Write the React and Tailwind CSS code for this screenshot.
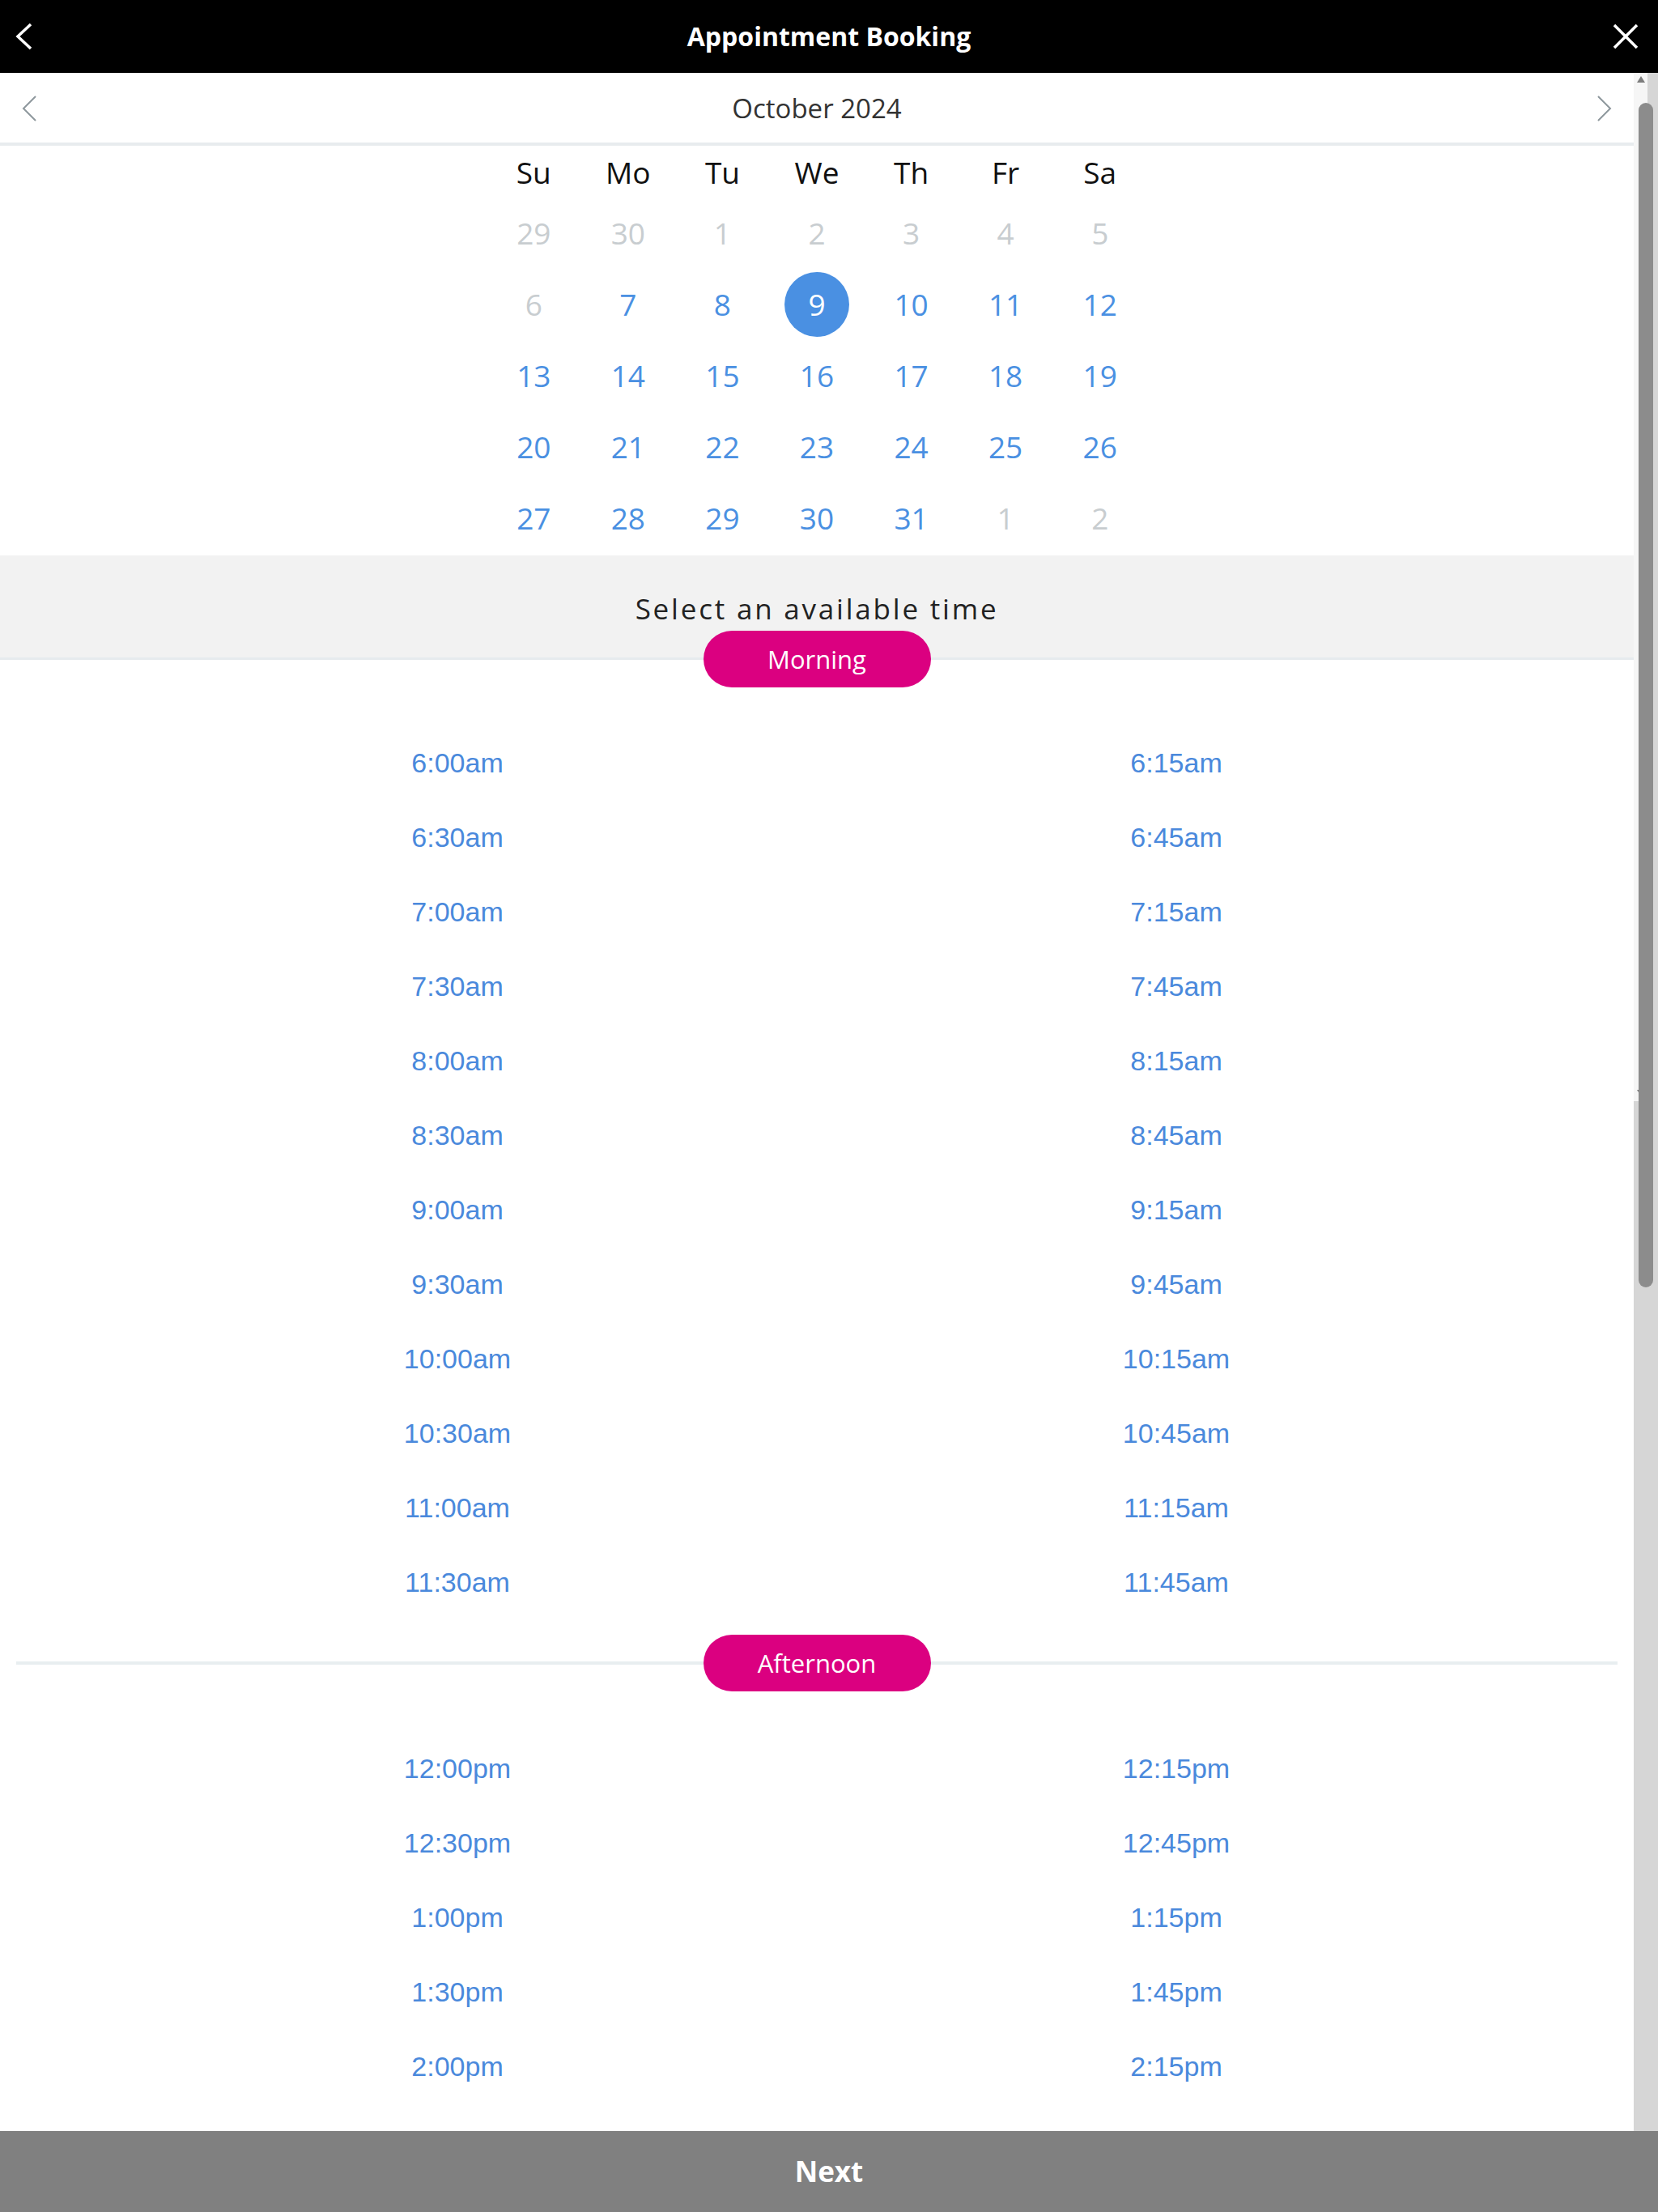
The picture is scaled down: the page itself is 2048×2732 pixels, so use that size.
import React, { useState } from "react";

const weekDays = ["Su", "Mo", "Tu", "We", "Th", "Fr", "Sa"];

// each cell: [label, muted]
const weeks = [
  [[29, true], [30, true], [1, true], [2, true], [3, true], [4, true], [5, true]],
  [[6, true], [7], [8], [9], [10], [11], [12]],
  [[13], [14], [15], [16], [17], [18], [19]],
  [[20], [21], [22], [23], [24], [25], [26]],
  [[27], [28], [29], [30], [31], [1, true], [2, true]],
];

function buildTimes(hours, suffix) {
  const out = [];
  hours.forEach((h) => {
    ["00", "15", "30", "45"].forEach((m) => out.push(`${h}:${m}${suffix}`));
  });
  return out;
}

const morning = buildTimes([6, 7, 8, 9, 10, 11], "am");
const afternoon = buildTimes([12, 1, 2, 3, 4, 5], "pm");

function Pill({ label }) {
  return (
    <div className="relative z-10 flex justify-center">
      <span className="flex h-[70px] w-[281px] items-center justify-center rounded-full bg-[#db0080] text-[31px] text-white">
        {label}
      </span>
    </div>
  );
}

function TimeGrid({ times, selected, onPick }) {
  return (
    <div className="mx-auto grid w-[1776px] grid-cols-2">
      {times.map((t) => (
        <button
          key={t}
          onClick={() => onPick(t)}
          className={`flex h-[92px] items-center justify-center pt-[1px] font-['Liberation_Sans',Arial,sans-serif] text-[34px] ${
            selected === t ? "text-[#2a5fa8]" : "text-[#4a89dc]"
          }`}
        >
          {t}
        </button>
      ))}
    </div>
  );
}

export default function App() {
  const [day, setDay] = useState(9);
  const [time, setTime] = useState(null);

  return (
    <div className="flex h-[2732px] w-[2048px] flex-col overflow-hidden bg-white font-['Open_Sans',sans-serif]">
      {/* HEADER */}
      <div className="grid h-[90px] shrink-0 grid-cols-[1fr_auto_1fr] items-center bg-black text-white">
        <div className="pl-[18px]">
          <svg width="24" height="34" viewBox="0 0 24 34" fill="none">
            <path d="M20 2 L4 17 L20 32" stroke="white" strokeWidth="3.5" />
          </svg>
        </div>
        <h1 className="text-[32px] font-bold leading-none">Appointment Booking</h1>
        <div className="flex justify-end pr-[24px]">
          <svg width="32" height="32" viewBox="0 0 32 32" fill="none">
            <path d="M2 2 L30 30 M30 2 L2 30" stroke="white" strokeWidth="3.5" />
          </svg>
        </div>
      </div>

      {/* BODY */}
      <div className="flex min-h-0 flex-1">
        <div className="min-w-0 flex-1 overflow-hidden">
          {/* MONTH NAV */}
          <div className="flex h-[90px] items-center justify-between border-b-[4px] border-[#e8ecee] pl-[26px] pr-[26px] pt-[1px]">
            <svg width="20" height="32" viewBox="0 0 20 32" fill="none">
              <path d="M18 1 L3 16 L18 31" stroke="#8d979c" strokeWidth="2" />
            </svg>
            <span className="text-[33px] text-[#333]">October 2024</span>
            <svg width="20" height="32" viewBox="0 0 20 32" fill="none">
              <path d="M2 1 L17 16 L2 31" stroke="#8d979c" strokeWidth="2" />
            </svg>
          </div>

          {/* CALENDAR */}
          <div className="mx-auto w-[816px] pt-[2px] pb-[2px]">
            <div className="grid h-[62px] grid-cols-7 items-center text-center text-[37px] text-[#111]">
              {weekDays.map((d) => (
                <span key={d}>{d}</span>
              ))}
            </div>
            {weeks.map((week, wi) => (
              <div key={wi} className="grid h-[88px] grid-cols-7 items-center">
                {week.map(([n, muted]) => {
                  const isSel = !muted && n === day;
                  return (
                    <div key={`${wi}-${n}`} className="flex justify-center">
                      <button
                        onClick={() => !muted && setDay(n)}
                        className={`flex h-[80px] w-[80px] items-center justify-center rounded-full text-[37px] ${
                          isSel
                            ? "bg-[#4a90e2] text-white"
                            : muted
                            ? "text-[#c8cdd0]"
                            : "text-[#4a90e2]"
                        }`}
                      >
                        {n}
                      </button>
                    </div>
                  );
                })}
              </div>
            ))}
          </div>

          {/* TIME PICKER */}
          <div className="flex h-[129px] items-start justify-center border-b-[3px] border-[#e6ebee] bg-[#f2f2f2] pt-[43px]">
            <span className="text-[35px] leading-[46px] tracking-[0.08em] text-[#222]">
              Select an available time
            </span>
          </div>
          <div className="-mt-[36px]">
            <Pill label="Morning" />
          </div>
          <div className="mt-[47px]">
            <TimeGrid times={morning} selected={time} onPick={setTime} />
          </div>

          <div className="relative mt-[19px] mb-[49px]">
            <div className="absolute left-[20px] right-[20px] top-[33px] h-[4px] bg-[#e8eef0]" />
            <Pill label="Afternoon" />
          </div>
          <TimeGrid times={afternoon} selected={time} onPick={setTime} />
        </div>

        {/* SCROLLBAR */}
        <div className="relative w-[30px] shrink-0 bg-[#d6d6d6]">
          <div className="flex h-[1270px] w-[17px] flex-col items-center justify-between bg-[#f6f6f6] pt-[4px] pb-[6px]">
            <svg width="10" height="8" viewBox="0 0 10 8">
              <path d="M5 0 L10 8 L0 8 Z" fill="#7d7d7d" />
            </svg>
            <svg width="10" height="8" viewBox="0 0 10 8">
              <path d="M0 0 L10 0 L5 8 Z" fill="#7d7d7d" />
            </svg>
          </div>
          <div className="absolute left-[6px] top-[37px] h-[1463px] w-[18px] rounded-full bg-[#8c8c8c]" />
        </div>
      </div>

      {/* FOOTER */}
      <button className="flex h-[100px] shrink-0 items-center justify-center bg-[#808080] text-[35px] font-bold text-white">
        Next
      </button>
    </div>
  );
}
